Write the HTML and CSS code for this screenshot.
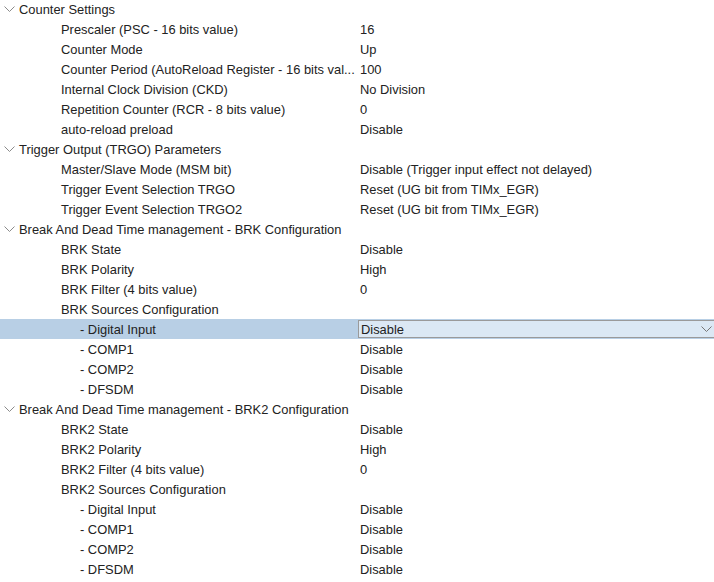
FILE: index.html
```html
<!DOCTYPE html>
<html>
<head>
<meta charset="utf-8">
<link rel="stylesheet" href="styles.css">
</head>
<body>
<div class="tree">
  <div class="row group"><span class="chev"><svg width="11" height="7" viewBox="0 0 11 7"><path d="M0.5 0.5 L5.5 5.5 L10.5 0.5" fill="none" stroke="#8a8a8a" stroke-width="1"/></svg></span><span class="glabel">Counter Settings</span></div>
  <div class="row"><span class="label">Prescaler (PSC - 16 bits value)</span><span class="value">16</span></div>
  <div class="row"><span class="label">Counter Mode</span><span class="value">Up</span></div>
  <div class="row"><span class="label">Counter Period (AutoReload Register - 16 bits val...</span><span class="value">100</span></div>
  <div class="row"><span class="label">Internal Clock Division (CKD)</span><span class="value">No Division</span></div>
  <div class="row"><span class="label">Repetition Counter (RCR - 8 bits value)</span><span class="value">0</span></div>
  <div class="row"><span class="label">auto-reload preload</span><span class="value">Disable</span></div>
  <div class="row group"><span class="chev"><svg width="11" height="7" viewBox="0 0 11 7"><path d="M0.5 0.5 L5.5 5.5 L10.5 0.5" fill="none" stroke="#8a8a8a" stroke-width="1"/></svg></span><span class="glabel">Trigger Output (TRGO) Parameters</span></div>
  <div class="row"><span class="label">Master/Slave Mode (MSM bit)</span><span class="value">Disable (Trigger input effect not delayed)</span></div>
  <div class="row"><span class="label">Trigger Event Selection TRGO</span><span class="value">Reset (UG bit from TIMx_EGR)</span></div>
  <div class="row"><span class="label">Trigger Event Selection TRGO2</span><span class="value">Reset (UG bit from TIMx_EGR)</span></div>
  <div class="row group"><span class="chev"><svg width="11" height="7" viewBox="0 0 11 7"><path d="M0.5 0.5 L5.5 5.5 L10.5 0.5" fill="none" stroke="#8a8a8a" stroke-width="1"/></svg></span><span class="glabel">Break And Dead Time management - BRK Configuration</span></div>
  <div class="row"><span class="label">BRK State</span><span class="value">Disable</span></div>
  <div class="row"><span class="label">BRK Polarity</span><span class="value">High</span></div>
  <div class="row"><span class="label">BRK Filter (4 bits value)</span><span class="value">0</span></div>
  <div class="row"><span class="label">BRK Sources Configuration</span><span class="value"></span></div>
  <div class="row selected"><span class="label sub">- Digital Input</span><span class="combo"><span class="combo-text">Disable</span><svg class="combo-arrow" width="11" height="7" viewBox="0 0 11 7"><path d="M0.5 0.5 L5.5 5.5 L10.5 0.5" fill="none" stroke="#777" stroke-width="1"/></svg></span></div>
  <div class="row"><span class="label sub">- COMP1</span><span class="value">Disable</span></div>
  <div class="row"><span class="label sub">- COMP2</span><span class="value">Disable</span></div>
  <div class="row"><span class="label sub">- DFSDM</span><span class="value">Disable</span></div>
  <div class="row group"><span class="chev"><svg width="11" height="7" viewBox="0 0 11 7"><path d="M0.5 0.5 L5.5 5.5 L10.5 0.5" fill="none" stroke="#8a8a8a" stroke-width="1"/></svg></span><span class="glabel">Break And Dead Time management - BRK2 Configuration</span></div>
  <div class="row"><span class="label">BRK2 State</span><span class="value">Disable</span></div>
  <div class="row"><span class="label">BRK2 Polarity</span><span class="value">High</span></div>
  <div class="row"><span class="label">BRK2 Filter (4 bits value)</span><span class="value">0</span></div>
  <div class="row"><span class="label">BRK2 Sources Configuration</span><span class="value"></span></div>
  <div class="row"><span class="label sub">- Digital Input</span><span class="value">Disable</span></div>
  <div class="row"><span class="label sub">- COMP1</span><span class="value">Disable</span></div>
  <div class="row"><span class="label sub">- COMP2</span><span class="value">Disable</span></div>
  <div class="row"><span class="label sub">- DFSDM</span><span class="value">Disable</span></div>
</div>
</body>
</html>
```
FILE: styles.css
```css
html, body {
  margin: 0;
  padding: 0;
  background: #ffffff;
  overflow: hidden;
}
.tree {
  margin-top: -1px;
  font-family: "Liberation Sans", Arial, sans-serif;
  font-size: 12.9px;
  color: #222222;
}
.row {
  display: flex;
  align-items: center;
  height: 20px;
  line-height: 20px;
  padding-top: 1px;
  box-sizing: border-box;
  white-space: nowrap;
}
.chev {
  width: 19px;
  display: flex;
  align-items: center;
  padding-left: 4px;
  padding-bottom: 1px;
  box-sizing: border-box;
}
.glabel {
  flex: none;
}
.label {
  width: 299px;
  padding-left: 61px;
  flex: none;
  overflow: hidden;
}
.label.sub {
  padding-left: 80px;
  width: 280px;
}
.value {
  flex: 1;
}
.selected {
  background: #b8cfe5;
}
.combo {
  align-self: flex-start;
  margin-left: -2px;
  flex: 1;
  height: 18px;
  line-height: 17px;
  box-sizing: border-box;
  border: 1px solid #9a9a9a;
  border-right: none;
  background: #dbe8f4;
  display: flex;
  align-items: center;
  padding-left: 2px;
  padding-top: 1px;
}
.combo-text {
  flex: 1;
}
.combo-arrow {
  margin-right: 2px;
}
```
